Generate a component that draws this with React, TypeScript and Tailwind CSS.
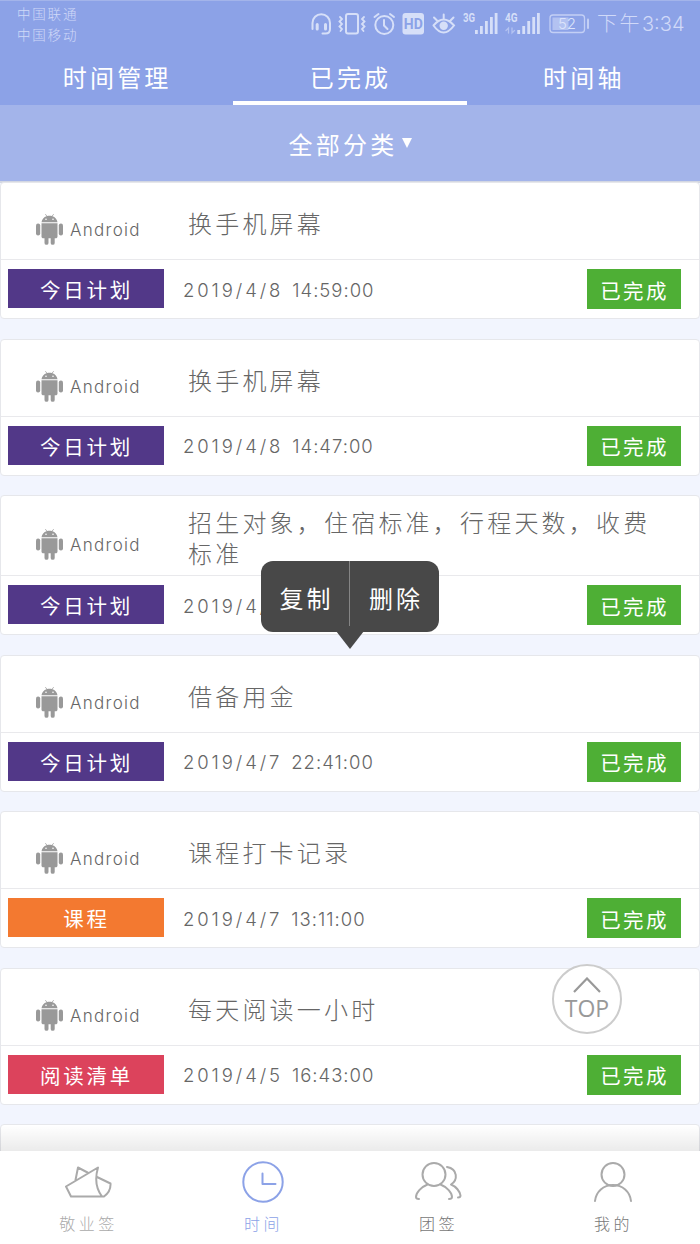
import { useState } from 'react'

type Task = {
  id: number
  title: string
  tag: string
  tagColor: string
  date: string
  time?: string
  long?: boolean
}

const tasks: Task[] = [
  { id: 1, title: '换手机屏幕', tag: '今日计划', tagColor: 'bg-[#523888]', date: '2019/4/8', time: '14:59:00' },
  { id: 2, title: '换手机屏幕', tag: '今日计划', tagColor: 'bg-[#523888]', date: '2019/4/8', time: '14:47:00' },
  { id: 3, title: '招生对象，住宿标准，行程天数，收费标准', tag: '今日计划', tagColor: 'bg-[#523888]', date: '2019/4/', long: true },
  { id: 4, title: '借备用金', tag: '今日计划', tagColor: 'bg-[#523888]', date: '2019/4/7', time: '22:41:00' },
  { id: 5, title: '课程打卡记录', tag: '课程', tagColor: 'bg-[#f37930]', date: '2019/4/7', time: '13:11:00' },
  { id: 6, title: '每天阅读一小时', tag: '阅读清单', tagColor: 'bg-[#dc435c]', date: '2019/4/5', time: '16:43:00' },
]

const tabs = ['时间管理', '已完成', '时间轴']

function AndroidIcon() {
  return (
    <svg width="27" height="31" viewBox="0 0 27 31" className="shrink-0" fill="#999">
      <path d="M5.5 8.2C5.8 5.2 8 3 10.6 2.2L9 .3l.5-.3 1.7 2c1.5-.4 3.1-.4 4.6 0l1.7-2 .5.3-1.6 1.9c2.6.8 4.8 3 5.1 6z" />
      <circle cx="10" cy="5.2" r=".8" fill="#fff" />
      <circle cx="17" cy="5.2" r=".8" fill="#fff" />
      <path d="M5.5 9.3h16v13.2c0 1-.8 1.8-1.8 1.8H7.3c-1 0-1.8-.8-1.8-1.8z" />
      <rect x="0" y="9.5" width="4.2" height="12" rx="2" />
      <rect x="22.8" y="9.5" width="4.2" height="12" rx="2" />
      <rect x="8.5" y="20" width="4" height="10.8" rx="1.9" />
      <rect x="14.7" y="20" width="4" height="10.8" rx="1.9" />
    </svg>
  )
}

function StatusIcons() {
  return (
    <svg width="280" height="30" viewBox="310 8 280 30" fill="none" stroke="#d6dff8" strokeWidth="2" strokeLinecap="round">
      {/* headset */}
      <path d="M312.5 29v-6a8.500 8.500 0 0 1 17.500 0v6c0 3-2 4.500-4.500 4.500h-3" />
      <path d="M317.2 24.5v4.500M325.500 24.500v4.500" strokeWidth="3" />
      {/* vibrate */}
      <rect x="346" y="14" width="12" height="19.5" rx="2" />
      <path d="M340 17l2 2-2.500 2.500 2.500 2.500-2.500 2.500 2.500 2.500-1.500 2M364 17l-2 2 2.500 2.500-2.500 2.500 2.500 2.500-2.500 2.500 1.500 2" strokeWidth="1.8" />
      {/* alarm */}
      <circle cx="384.3" cy="25" r="9" />
      <path d="M384 20v5.500l3.500 3.500M374.500 17l4-3M394 17l-4-3" />
      {/* HD */}
      <rect x="402.5" y="13" width="21.5" height="21.5" rx="3" fill="#d6dff8" stroke="none" />
      <text x="413.3" y="29" textAnchor="middle" fill="#8ca2e7" stroke="none" fontSize="14" fontWeight="700" fontFamily="Roboto, sans-serif">HD</text>
      {/* eye */}
      <path d="M433.500 25.500q10-12 20.500 0-10.500 14-20.500 0M443.700 14.500v4M434 17.500l3 3M453.500 17.500l-3 3" />
      <circle cx="443.7" cy="25.7" r="4.2" fill="#d6dff8" stroke="none" />
      {/* signals */}
      <g stroke="none" fill="#d6dff8">
        <text x="463" y="22" fontSize="13" fontWeight="700" fontFamily="Roboto, sans-serif" textLength="12" lengthAdjust="spacingAndGlyphs">3G</text>
        <text x="505" y="22" fontSize="13" fontWeight="700" fontFamily="Roboto, sans-serif" textLength="12.5" lengthAdjust="spacingAndGlyphs">4G</text>
        <path d="M475 30h2.800v4H475zM480 26h2.800v8H480zM485 21h2.800v13H485zM490 17h2.800v17H490zM494.700 13h2.800v21h-2.800z" />
        <path d="M517.300 30h2.800v4h-2.800zM522.300 26h2.800v8h-2.800zM527.300 21h2.800v13h-2.800zM532.300 17h2.800v17h-2.800zM537 13h2.800v21H537z" />
      </g>
      <path d="M508.500 33v-5l-2.500 2.500M512 28v5l2.500-2.500" stroke="#b3c2f1" strokeWidth="1.3" />
      {/* battery */}
      <rect x="550" y="15" width="34.5" height="17.5" rx="3" strokeWidth="1.3" stroke="#c3cff5" />
      <rect x="552.5" y="17.5" width="16" height="12.5" fill="#b3c2f1" stroke="none" />
      <path d="M588 19.500v8.500" stroke="#c3cff5" />
      <text x="567" y="29.300" textAnchor="middle" fill="#dce4fb" stroke="none" fontSize="15" fontFamily="Inter, sans-serif">52</text>
    </svg>
  )
}

function TaskCard({ task }: { task: Task }) {
  return (
    <div className="rounded-[4px] border border-[#e6e7eb] bg-white">
      <div className={`flex border-b border-[#e9e9ec] pl-[35px] ${task.long ? 'h-[80px]' : 'h-[77px]'}`}>
        <div className={`flex w-[151px] shrink-0 ${task.long ? 'pt-[33px]' : 'pt-[31px]'}`}>
          <AndroidIcon />
          <span className="ml-[7px] mt-[4px] text-[17px] font-light leading-[24px] tracking-[1.3px] text-[#666]">Android</span>
        </div>
        <div className={`w-[480px] pl-px text-[24px] leading-[31px] tracking-[3.2px] text-[#666] ${task.long ? 'pt-[12px]' : 'pt-[26px]'}`}>
          {task.title}
        </div>
      </div>
      <div className="flex h-[58px] pl-[7px] pr-[18px] pt-[9px]">
        <div className={`flex h-[39px] w-[156px] items-center justify-center pl-px pt-[6px] text-[20.5px] font-normal tracking-[2.8px] text-white ${task.tagColor}`}>
          {task.tag}
        </div>
        <div className="ml-[19px] flex h-[40px] items-center gap-[9px] pt-[3px] text-[18.5px] font-light tracking-[1px] text-[#666]">
          <span className="tracking-[2.9px]">{task.date}</span>
          {task.time && <span>{task.time}</span>}
        </div>
        <div className="ml-auto flex h-[40px] w-[94px] items-center justify-center bg-[#4eaf35] pl-px pt-[6px] text-[20.5px] font-normal tracking-[2.3px] text-white">
          已完成
        </div>
      </div>
    </div>
  )
}

const navItems = [
  {
    label: '敬业签',
    color: 'text-[#aaa]',
    icon: (
      <>
        <path d="M2 25.500L34 6.500q-5 17 4 29H7zM11.500 19L14 6.500l9.500 5M33 16l13.500 6.500q.5 8-6.500 13h-3" />
      </>
    ),
  },
  {
    label: '时间',
    color: 'text-[#8ca2e7]',
    icon: (
      <>
        <circle cx="24" cy="21" r="19.7" />
        <path d="M23.500 12.500v10.500h13" />
      </>
    ),
  },
  {
    label: '团签',
    color: 'text-[#777]',
    icon: (
      <>
        <circle cx="20" cy="13.5" r="11.5" />
        <path d="M13.500 23.500C7 26 2 32 2 36q0 2 3 2M26.500 23.500C33 26 38 32 38 36q0 2-3 2M33 6c11 2 11 13 4 17.500 5 2 9 7 9.500 11q0 2-2.500 2" />
      </>
    ),
  },
  {
    label: '我的',
    color: 'text-[#777]',
    icon: (
      <>
        <circle cx="24" cy="13.5" r="11.5" />
        <path d="M6 40c1-9.500 8.500-16 18-16s17 6.500 18 16" />
      </>
    ),
  },
]

export default function App() {
  const [activeTab, setActiveTab] = useState(1)
  const [activeNav, setActiveNav] = useState(1)

  return (
    <div className="relative flex h-[1244px] w-[700px] flex-col overflow-hidden bg-[#f2f5fe] font-['Inter','Noto_Sans_CJK_SC',sans-serif] font-light">
      <header className="h-[105px] shrink-0 border-t border-[#a3b4ea] bg-[#8ca2e7]">
        <div className="flex h-[49px] text-[#d0d9f8]">
          <div className="w-[310px] pl-[17px] pt-[3px] text-[13.5px] leading-[21px] tracking-[1.8px]">
            <div>中国联通</div>
            <div>中国移动</div>
          </div>
          <div className="pt-[7px]">
            <StatusIcons />
          </div>
          <div className="ml-[7px] whitespace-nowrap pt-[8px] text-[20px] leading-[30px]">
            <span className="tracking-[2.5px]">下午</span>3:34
          </div>
        </div>
        <div className="flex h-[55px] text-white">
          {tabs.map((tab, i) => (
            <button
              key={tab}
              onClick={() => setActiveTab(i)}
              className={`flex-1 pl-px pt-[6px] text-[24px] font-normal tracking-[3.2px] ${i === activeTab ? 'border-b-4 border-white' : 'border-b-4 border-transparent'}`}
            >
              {tab}
            </button>
          ))}
        </div>
      </header>

      <div className="flex h-[78px] shrink-0 items-center justify-center border-b-2 border-[#d3d7e2] bg-[#a3b4ea] pl-px pt-[6px] text-[24px] font-normal tracking-[3.2px] text-white">
        全部分类
        <svg width="10" height="10" viewBox="0 0 10 10" fill="currentColor" className="mb-[6px] ml-[5px]">
          <path d="M0 0h10L5 10z" />
        </svg>
      </div>

      <main className="relative -mt-px flex h-[969px] shrink-0 flex-col gap-[19.5px] overflow-hidden">
        {tasks.map((task) => (
          <TaskCard key={task.id} task={task} />
        ))}
        <div className="h-[80px] shrink-0 rounded-[4px] border border-[#e6e7eb] bg-white" />

        <div className="absolute bottom-0 left-0 h-[26px] w-full bg-linear-to-b from-transparent to-black/8" />

        {/* long-press menu */}
        <div className="absolute left-[261px] top-[379px] flex h-[71px] w-[178px] rounded-[12px] bg-[#484848] text-[24px] font-normal tracking-[3px] text-white">
          <button className="h-full w-[88px] pl-[3px] pt-[6px]">复制</button>
          <div className="h-[65px] w-px bg-[#858585]" />
          <button className="h-full w-[89px] pl-[3px] pt-[6px]">删除</button>
          <svg width="28" height="18" viewBox="0 0 28 18" fill="#484848" className="absolute left-[75px] top-[70px]">
            <path d="M0 0h28L14 18z" />
          </svg>
        </div>

        <button className="absolute left-[552px] top-[782px] flex size-[70px] flex-col items-center rounded-full border-2 border-[#ccc] bg-white text-[#999]">
          <svg width="28" height="16" viewBox="0 0 28 16" fill="none" stroke="currentColor" strokeWidth="2.2" className="mt-[11px]">
            <path d="M1 15L14 1.500 27 15" />
          </svg>
          <span className="mt-[2px] font-['Open_Sans',sans-serif] text-[23px] font-normal leading-[26px]">TOP</span>
        </button>
      </main>

      <nav className="flex h-[93px] bg-white">
        {navItems.map((item, i) => (
          <button key={item.label} onClick={() => setActiveNav(i)} className={`flex flex-1 flex-col items-center pt-[10px] ${item.color}`}>
            <svg
              width="48"
              height="42"
              viewBox="0 0 48 42"
              fill="none"
              stroke={i === activeNav ? '#8ca2e7' : '#aaa'}
              strokeWidth="2"
              strokeLinecap="round"
              strokeLinejoin="round"
            >
              {item.icon}
            </svg>
            <span className="mt-[9px] pl-[2px] text-[16px] leading-[24px] tracking-[3.5px]">{item.label}</span>
          </button>
        ))}
      </nav>
    </div>
  )
}
